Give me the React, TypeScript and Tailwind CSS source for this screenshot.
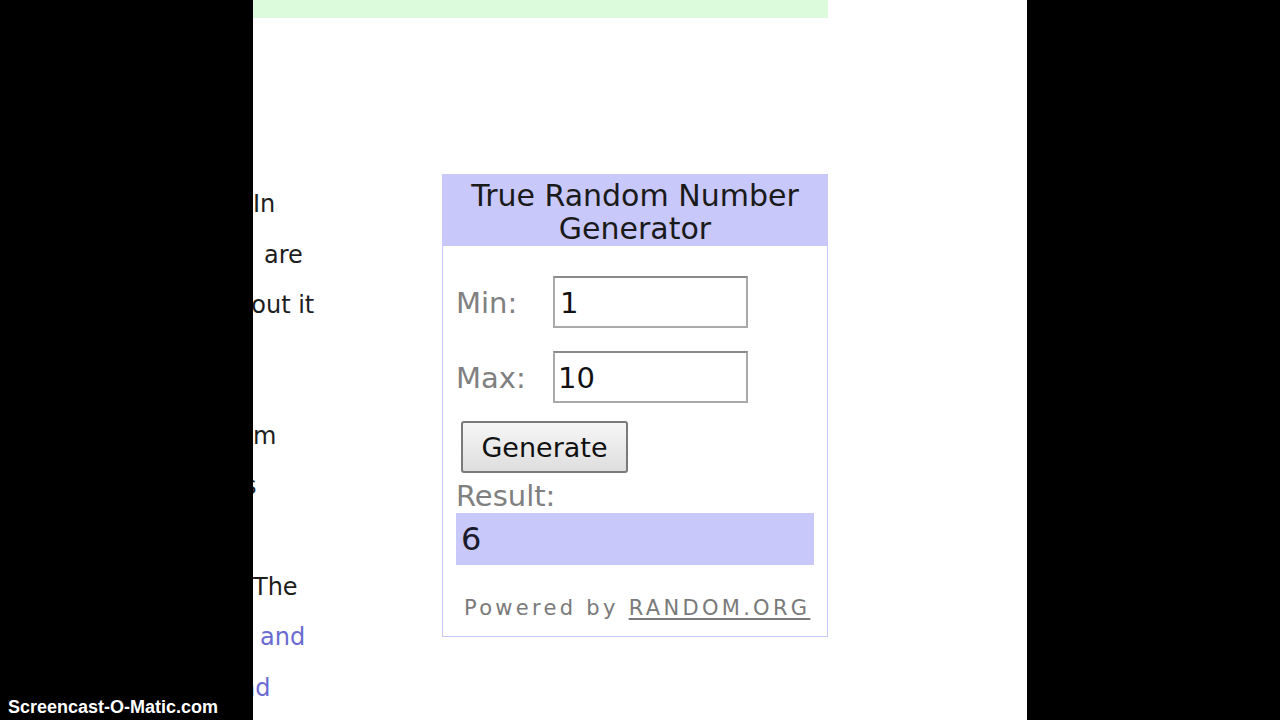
export default function App() {
  // visible fragments of the article column, cut by the left black band
  const leftLines: { text: string; mt: string; ml: string; cls: string }[] = [
    { text: 'In', mt: 'mt-0', ml: 'ml-0', cls: 'text-[#1e1e1e]' },
    { text: 'are', mt: 'mt-0', ml: 'ml-[11px]', cls: 'text-[#1e1e1e]' },
    { text: 'bout it', mt: 'mt-0', ml: '-ml-[17px]', cls: 'text-[#1e1e1e]' },
    { text: 'm', mt: 'mt-[80px]', ml: 'ml-0', cls: 'text-[#1e1e1e]' },
    { text: 's', mt: 'mt-0', ml: '-ml-[9px]', cls: 'text-[#1e1e1e]' },
    { text: 'The', mt: 'mt-[50px]', ml: 'ml-0', cls: 'text-[#1e1e1e]' },
    { text: 'and', mt: 'mt-0', ml: 'ml-[7px]', cls: 'text-[#6a6ad0]' },
    { text: 'nd', mt: 'mt-0', ml: '-ml-[13px]', cls: 'text-[#6a6ad0]' },
  ]

  return (
    <div className="flex h-[720px] w-[1280px] overflow-hidden bg-black" style={{ fontFamily: '"DejaVu Sans", Verdana, sans-serif' }}>
      {/* left black band with watermark */}
      <div className="relative w-[253px] shrink-0">
        <span
          className="absolute left-[8px] top-[694px] text-[18px] font-bold text-white"
          style={{ fontFamily: '"Liberation Sans", Arial, sans-serif' }}
        >
          Screencast-O-Matic.com
        </span>
      </div>

      {/* page */}
      <div className="flex w-[774px] shrink-0 flex-col bg-white">
        <div className="h-[18px] w-[575px] bg-[#dcfadc]" />

        <div className="flex">
          {/* clipped article text */}
          <div className="mt-[161px] w-[180px] overflow-hidden text-[24px] leading-[50.5px]">
            {leftLines.map((l, i) => (
              <div key={i} className={`h-[50.5px] whitespace-nowrap ${l.mt} ${l.ml} ${l.cls}`}>
                {l.text}
              </div>
            ))}
          </div>

          {/* widget */}
          <div className="ml-[9px] mt-[156px] flex h-[463px] w-[386px] flex-col border border-[#c8c8f8]">
            <div className="flex h-[71px] flex-col items-center justify-center pt-[3px] bg-[#c8c8fa] text-center text-[30px] leading-[33px] text-[#1a1a1a]">
              <span>True Random Number</span>
              <span>Generator</span>
            </div>

            <div className="flex flex-col px-[13px]">
              <div className="mt-[30px] flex items-center">
                <span className="w-[97px] pt-[4px] text-[29px] text-[#808080]">Min:</span>
                <div className="flex h-[52px] w-[195px] items-center border-2 border-[#a9a9a9] border-t-[#8a8a8a] pl-[5px] pt-[3px] text-[29px] text-[#111]">
                  1
                </div>
              </div>
              <div className="mt-[23px] flex items-center">
                <span className="w-[97px] pt-[4px] text-[29px] text-[#808080]">Max:</span>
                <div className="flex h-[52px] w-[195px] items-center border-2 border-[#a9a9a9] border-t-[#8a8a8a] pl-[3px] pt-[3px] text-[29px] text-[#111]">
                  10
                </div>
              </div>

              <button className="ml-[5px] mt-[18px] flex h-[52px] w-[167px] items-center justify-center rounded-[3px] border-2 border-[#7a7a7a] bg-gradient-to-b from-[#f6f6f6] to-[#dedede] pt-[3px] text-[27px] text-[#111]">
                Generate
              </button>

              <span className="mt-[6px] text-[29px] leading-[34px] text-[#808080]">Result:</span>
              <div className="mt-0 flex h-[52px] w-[358px] items-center bg-[#c8c8fa] pl-[5px] text-[32px] text-[#1a1a2a]">
                6
              </div>

              <div className="mt-[28px] pl-[8px] text-[21px] tracking-[3.3px] text-[#7a7a7a]">
                Powered by <span className="underline decoration-2 underline-offset-[3px]">RANDOM.ORG</span>
              </div>
            </div>
          </div>
        </div>
      </div>

      <div className="flex-1 bg-black" />
    </div>
  )
}
